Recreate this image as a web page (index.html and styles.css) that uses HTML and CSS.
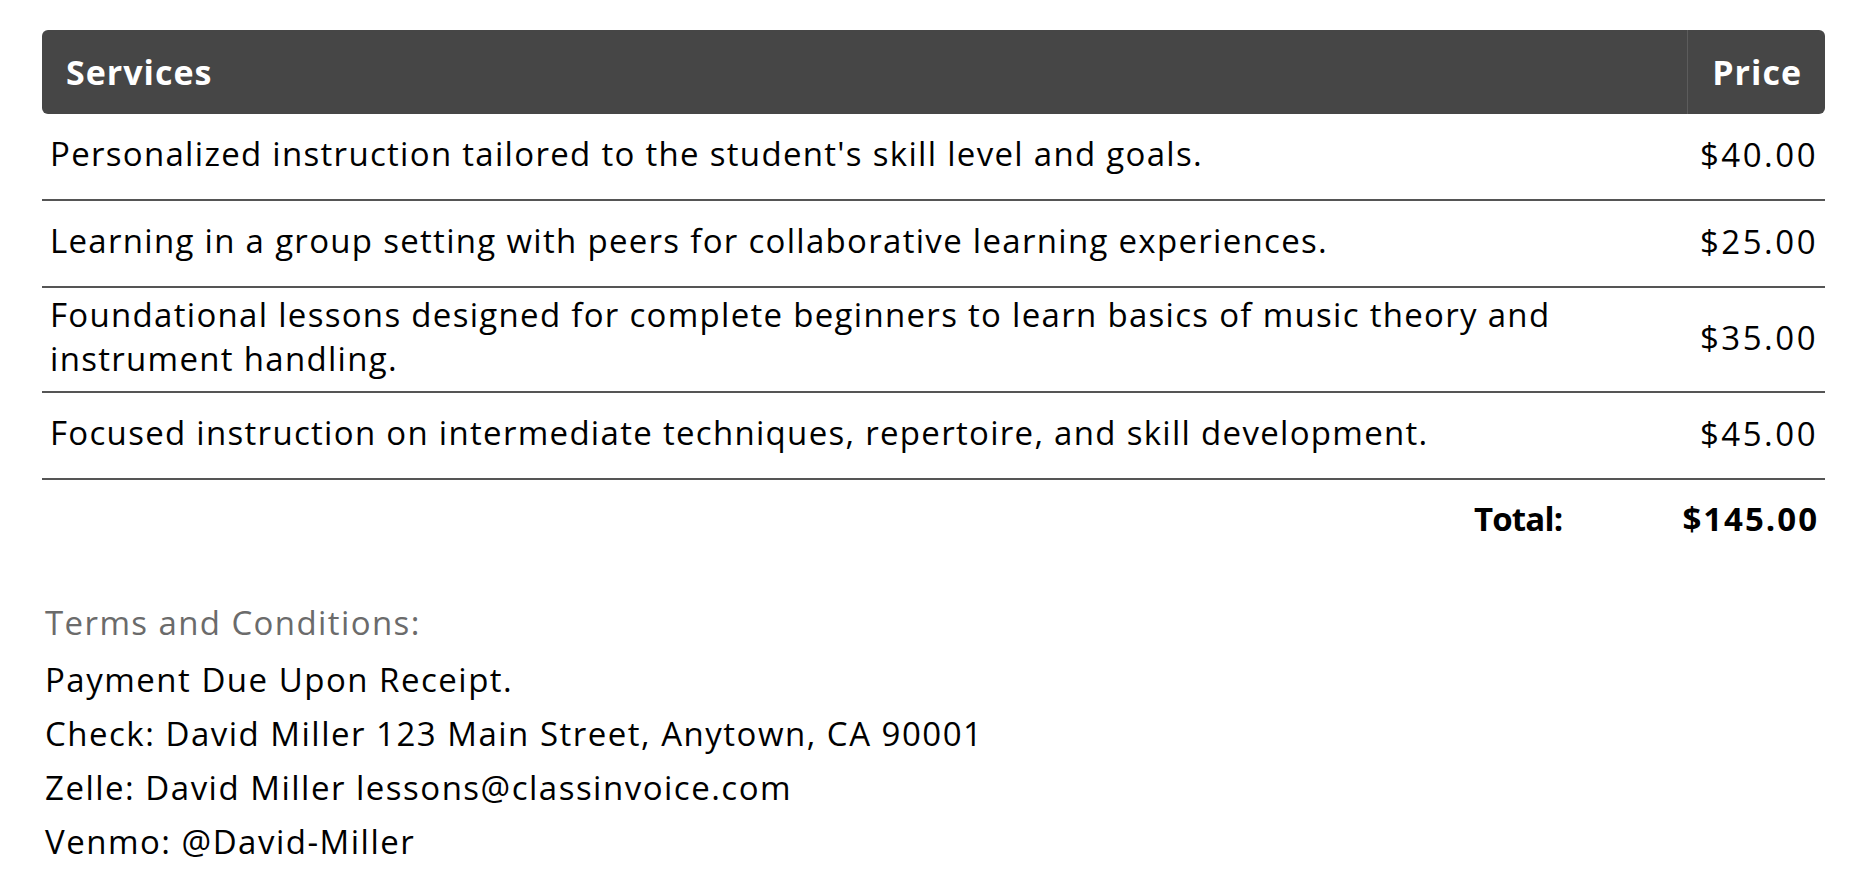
FILE: index.html
```html
<!DOCTYPE html>
<html>
<head>
<meta charset="utf-8">
<link rel="stylesheet" href="styles.css">
</head>
<body>
<div class="page">
  <table class="services">
    <thead>
      <tr>
        <th class="col-desc">Services</th>
        <th class="col-price">Price</th>
      </tr>
    </thead>
    <tbody>
      <tr>
        <td class="desc">Personalized instruction tailored to the student's skill level and goals.</td>
        <td class="price">$40.00</td>
      </tr>
      <tr>
        <td class="desc">Learning in a group setting with peers for collaborative learning experiences.</td>
        <td class="price">$25.00</td>
      </tr>
      <tr>
        <td class="desc">Foundational lessons designed for complete beginners to learn basics of music theory and instrument handling.</td>
        <td class="price">$35.00</td>
      </tr>
      <tr>
        <td class="desc">Focused instruction on intermediate techniques, repertoire, and skill development.</td>
        <td class="price">$45.00</td>
      </tr>
    </tbody>
  </table>
  <div class="total">
    <span class="total-label">Total:</span>
    <span class="total-value">$145.00</span>
  </div>
  <div class="terms">
    <p class="terms-title">Terms and Conditions:</p>
    <p>Payment Due Upon Receipt.</p>
    <p>Check: David Miller 123 Main Street, Anytown, CA 90001</p>
    <p>Zelle: David Miller lessons@classinvoice.com</p>
    <p>Venmo: @David-Miller</p>
  </div>
</div>
</body>
</html>
```

FILE: styles.css
```css
html, body {
  margin: 0;
  padding: 0;
  background: #ffffff;
}
body {
  font-family: "Open Sans", "Noto Sans", sans-serif;
  color: #000;
}
.page {
  width: 1783px;
  margin-left: 42px;
  padding-top: 30px;
}
.services {
  width: 100%;
  border-collapse: separate;
  border-spacing: 0;
  font-size: 33px;
}
.services th {
  background: #464646;
  color: #fff;
  height: 84px;
  padding: 0 24px;
  font-size: 34px;
  font-weight: 700;
  letter-spacing: 1px;
  text-align: left;
}
.services th.col-desc {
  border-top-left-radius: 6px;
  border-bottom-left-radius: 6px;
}
.services th.col-price {
  width: 89px;
  padding-right: 23px;
  text-align: right;
  border-left: 1px solid #5c5c5c;
  border-top-right-radius: 6px;
  border-bottom-right-radius: 6px;
}
.services td {
  border-bottom: 2px solid #555;
  vertical-align: middle;
  line-height: 44px;
}
.services td.desc {
  padding: 5px 60px 10px 8px;
  letter-spacing: 1.3px;
}
.services td.price {
  padding: 19px 7px 22px 0;
  text-align: right;
  white-space: nowrap;
  letter-spacing: 2.5px;
}
.total {
  display: flex;
  justify-content: flex-end;
  align-items: center;
  gap: 120px;
  padding: 17px 6px 0 0;
  font-size: 33px;
  font-weight: 700;
  line-height: 44px;
}
.total-label {
  letter-spacing: -0.8px;
}
.total-value {
  letter-spacing: 2px;
}
.terms {
  padding-top: 55px;
  padding-left: 3px;
  font-size: 33px;
  letter-spacing: 1.5px;
}
.terms p {
  margin: 0;
  line-height: 54px;
}
.terms .terms-title {
  color: #6b6b6b;
  letter-spacing: 1.4px;
  margin-bottom: 3px;
}
```
